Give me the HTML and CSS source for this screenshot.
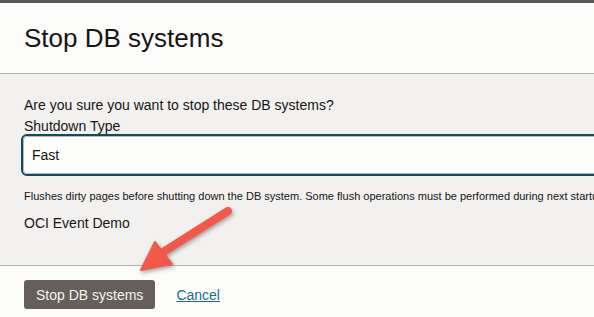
FILE: index.html
```html
<!DOCTYPE html>
<html lang="en">
<head>
    <meta charset="UTF-8">
    <title>Stop DB systems</title>
    <link rel="stylesheet" href="styles.css">
</head>
<body>
    <div class="fondo"></div>
    <div class="dialogo">
        <div class="cabecera">
            <h1>Stop DB systems</h1>
        </div>
        <div class="cuerpo">
            <p class="pregunta">Are you sure you want to stop these DB systems?</p>
            <label class="etiqueta">Shutdown Type</label>
            <div class="campo">
                <div class="valor">Fast</div>
            </div>
            <p class="ayuda">Flushes dirty pages before shutting down the DB system. Some flush operations must be performed during next startup.</p>
            <p class="nombre">OCI Event Demo</p>
        </div>
        <div class="pie">
            <button class="boton">Stop DB systems</button>
            <a href="#" class="cancelar">Cancel</a>
        </div>
    </div>
    <svg class="flecha" width="594" height="317" viewBox="0 0 594 317">
        <line x1="228" y1="211" x2="160" y2="254" stroke="#f2594b" stroke-width="8" stroke-linecap="round"/>
        <polygon points="155,242 172,264 141,270" fill="#f2594b" stroke="#f2594b" stroke-width="2" stroke-linejoin="round"/>
    </svg>
</body>
</html>
```

FILE: styles.css
```css
body{
    font-family: "Liberation Sans", Arial, Helvetica, sans-serif;
    margin: 0;
    padding: 0;
    width: 594px;
    height: 317px;
    overflow: hidden;
    background-color: #fcfcfb;
    color: #161513;
}
.fondo{
    height: 3px;
    background-color: #595959;
}
.cabecera{
    padding: 20px 24px;
    border-bottom: 1px solid #b5b3b0;
    background-color: #fcfcfb;
}
.cabecera h1{
    margin: 0;
    font-size: 26px;
    font-weight: normal;
    line-height: 30px;
}
.cuerpo{
    background-color: #f2f1f0;
    padding: 23px 24px 34px 24px;
    border-bottom: 1px solid #b5b3b0;
    white-space: nowrap;
    overflow: hidden;
}
.pregunta{
    margin: 0;
    font-size: 14px;
    line-height: 16px;
}
.etiqueta{
    display: block;
    margin-top: 5px;
    font-size: 14px;
    line-height: 16px;
}
.campo{
    width: 700px;
    margin-left: -3px;
    border: 2px solid #0f4c61;
    border-radius: 6px;
}
.valor{
    height: 36px;
    line-height: 36px;
    padding: 0 8px;
    font-size: 14px;
    background-color: #fdfdfc;
    border: 1px solid #bcb8b3;
    border-radius: 4px;
}
.ayuda{
    margin: 13px 0 0 0;
    font-size: 11px;
    line-height: 14px;
}
.nombre{
    margin: 12px 0 0 0;
    font-size: 14px;
    line-height: 16px;
}
.pie{
    display: flex;
    align-items: center;
    gap: 21px;
    padding: 14px 24px;
    background-color: #fcfcfb;
}
.boton{
    height: 29px;
    padding: 0 12px;
    font-family: inherit;
    font-size: 14px;
    color: #f5f3f0;
    background-color: #665e5a;
    border: none;
    border-radius: 3px;
}
.cancelar{
    font-size: 14px;
    color: #1f6b8b;
}
.flecha{
    position: absolute;
    left: 0;
    top: 0;
    pointer-events: none;
    filter: drop-shadow(1px 2px 2px rgba(0,0,0,0.35));
}
```
